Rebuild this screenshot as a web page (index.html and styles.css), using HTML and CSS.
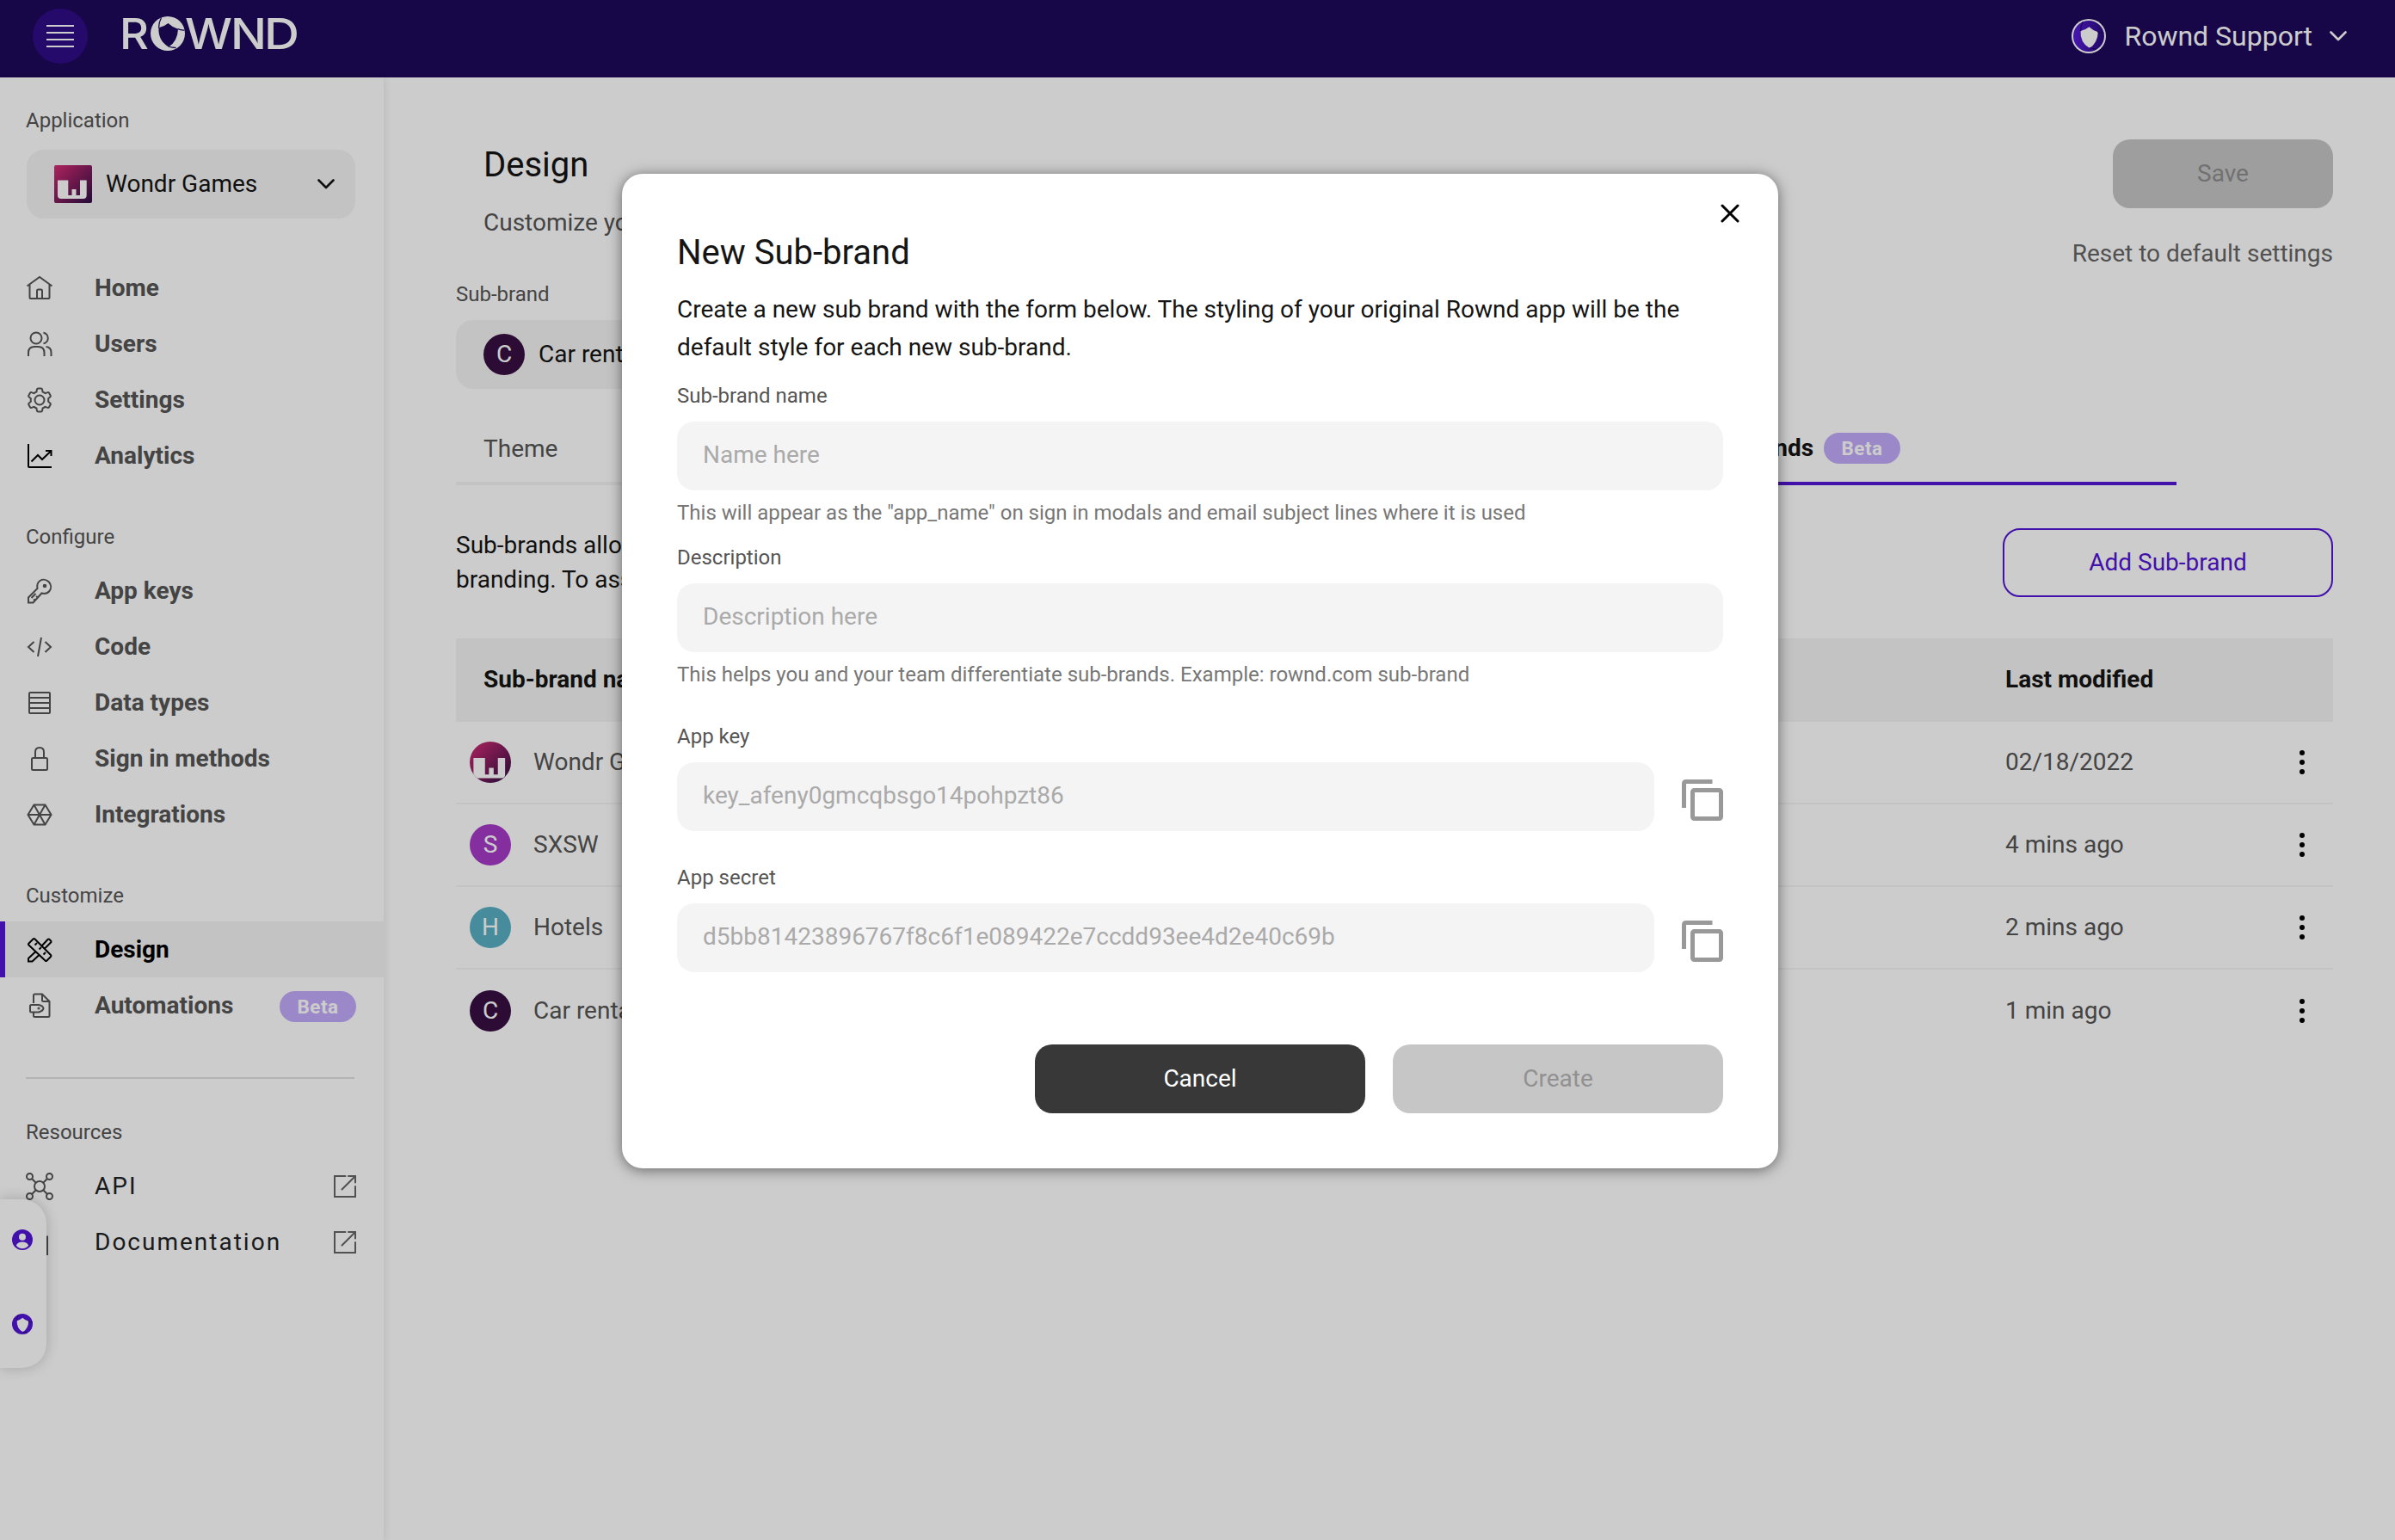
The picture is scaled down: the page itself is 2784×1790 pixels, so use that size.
FILE: index.html
```html
<!doctype html>
<html>
<head>
<meta charset="utf-8">
<title>Rownd - Design</title>
<link rel="stylesheet" href="styles.css">
</head>

<body>

<svg class="defs">
	<defs>
		<linearGradient id="wg" x1="0" y1="0" x2="1" y2="1">
			<stop offset="0" stop-color="#d92c76"/>
			<stop offset="1" stop-color="#2e0f45"/>
		</linearGradient>
		<linearGradient id="rg" x1="0" y1="0" x2="1" y2="0">
			<stop offset="0" stop-color="#5a1be0"/>
			<stop offset="1" stop-color="#2a0b7c"/>
		</linearGradient>
		<symbol id="wondr" viewBox="0 0 44 44">
			<rect width="44" height="44" fill="url(#wg)"/>
			<path fill="#fff" d="M4 17.500h12.300v17.500h4.200v-7h5v7h4.500v-17.500h7.700v17.500q0 4-4 4h-25.700q-4 0-4-4z"/>
		</symbol>
		<symbol id="shield" viewBox="0 0 40 40">
			<path fill-rule="evenodd" d="M20 0a20 20 0 1 1 0 40a20 20 0 0 1 0-40zM20.500 8Q15.500 12.200 9.500 13.200Q8.500 28 21 35.500Q31.500 29 32 14.700Q25 12.500 20.500 8z"/>
			<path class="cut" d="M12.500 1.500Q9.500 7 9.500 13.500M31.500 14.700Q35.500 16.300 39.500 16M20.800 35Q25 36.500 29.500 36.500"/>
		</symbol>
		<symbol id="chev" viewBox="0 0 20 12">
			<path d="M1.500 1.500l8.500 8.500l8.500-8.500" fill="none" stroke="currentColor" stroke-width="2.600" stroke-linecap="round" stroke-linejoin="round"/>
		</symbol>
		<symbol id="ext" viewBox="0 0 26 26">
			<path d="M13.500 1H1v24h24V13M17 1h8v7.500M24.500 1.500L9.500 16.500" fill="none" stroke="currentColor" stroke-width="2" stroke-linecap="round"/>
		</symbol>
		<symbol id="dots" viewBox="0 0 8 30">
			<circle cx="4" cy="4" r="3"/><circle cx="4" cy="15" r="3"/><circle cx="4" cy="26" r="3"/>
		</symbol>
		<symbol id="copy" viewBox="0 0 48 48">
			<path fill="none" stroke="currentColor" stroke-width="5" d="M2.500 33V5q0-2.500 2.500-2.500H35.500"/>
			<rect x="12.500" y="12.500" width="33" height="33" rx="2" fill="none" stroke="currentColor" stroke-width="5"/>
		</symbol>
	</defs>
</svg>

<div class="header">
	<a class="burger" href="#"><i></i><i></i><i></i><i></i></a>
	<svg class="logo" width="210" height="62" viewBox="-3 -12 210 62">
		<g class="logo_txt">
			<text x="-3" y="38" textLength="34" lengthAdjust="spacingAndGlyphs">R</text>
			<text x="73" y="38" textLength="55" lengthAdjust="spacingAndGlyphs">W</text>
			<text x="126" y="38" textLength="42" lengthAdjust="spacingAndGlyphs">N</text>
			<text x="165" y="38" textLength="41" lengthAdjust="spacingAndGlyphs">D</text>
		</g>
		<use href="#shield" x="33" y="0" width="40" height="40"/>
	</svg>
	<div class="account">
		<svg class="account_pic" width="40" height="40"><circle cx="20" cy="20" r="20" fill="#fff"/><use href="#shield" x="2" y="2" width="36" height="36"/></svg>
		<span>Rownd Support</span>
		<svg width="20" height="12"><use href="#chev"/></svg>
	</div>
</div>

<div class="wrap">
	<div class="side">
		<p class="label">Application</p>
		<div class="app_select">
			<svg class="app_pic" width="44" height="44"><use href="#wondr"/></svg>
			<span>Wondr Games</span>
			<svg width="20" height="12"><use href="#chev"/></svg>
		</div>
		<ul class="nav">
			<li><svg viewBox="0 0 32 32"><path d="M1.500 13.500L16 3l14.500 10.500M4.500 11.500V27q0 1 1 1h21q1 0 1-1V11.500M13 28v-9q0-1.500 1.500-1.500h3q1.500 0 1.500 1.500v9"/></svg>Home</li>
			<li><svg viewBox="0 0 32 32"><circle cx="12" cy="9" r="6.500"/><path d="M3 30v-4q0-7 7-7h4.500q7 0 7 7v4M20.500 2.700a6.400 6.400 0 0 1 0 12.600M23.500 19q6 .5 6 7v4"/></svg>Users</li>
			<li><svg viewBox="0 0 32 32"><circle cx="16" cy="16" r="5.500"/><path d="M13 3.500q.2-1 1.200-1h3.600q1 0 1.200 1l.6 3q1.500.5 2.900 1.600l2.900-1q1-.3 1.500.5l1.800 3.100q.5.900-.3 1.600l-2.300 2q.3 1.700 0 3.400l2.300 2q.8.700.3 1.600l-1.800 3.100q-.5.800-1.500.5l-2.900-1q-1.400 1.100-2.900 1.600l-.6 3q-.2 1-1.200 1h-3.600q-1 0-1.200-1l-.6-3q-1.500-.5-2.900-1.600l-2.900 1q-1 .3-1.500-.5l-1.800-3.100q-.5-.9.3-1.600l2.300-2q-.3-1.700 0-3.400l-2.300-2q-.8-.7-.3-1.600l1.800-3.100q.5-.8 1.500-.5l2.900 1q1.400-1.100 2.900-1.600z"/></svg>Settings</li>
			<li><svg class="black" viewBox="0 0 32 32"><path d="M3 2v26q0 1 1 1h26M6.500 22.500l7.500-7.500 5 5L29 10.500M23 10h6.500v6"/></svg>Analytics</li>
		</ul>
		<p class="label">Configure</p>
		<ul class="nav">
			<li><svg viewBox="0 0 32 32"><path d="M13.500 13q-1.300-6 3-9a8.300 8.300 0 0 1 11 12q-3.500 4-9 2.500L8.500 29.500H3v-6zM9 25.500l2 1.500M12 22l2 1.500M6.500 24l5-5"/><circle cx="22" cy="10" r="1.300" fill="currentColor"/></svg>App keys</li>
			<li><svg viewBox="0 0 32 32"><path d="M9.500 10l-6.500 6 6.500 6M22.500 10l6.500 6-6.500 6M18 5l-4 22"/></svg>Code</li>
			<li><svg viewBox="0 0 32 32"><rect x="4" y="4" width="24" height="24" rx="1"/><path d="M4 10h24M4 16h24M4 22h24"/></svg>Data types</li>
			<li><svg viewBox="0 0 32 32"><rect x="7" y="15" width="18" height="14" rx="1.500"/><path d="M11 15V8q0-5 5-5t5 5v7"/></svg>Sign in methods</li>
			<li><svg viewBox="0 0 32 32"><path d="M9.500 4.500h13L29.500 16l-7 11.500h-13L2.500 16zM2.500 16h27M9.500 4.500l13 23M22.500 4.500l-13 23"/></svg>Integrations</li>
		</ul>
		<p class="label">Customize</p>
		<ul class="nav">
			<li class="on"><svg class="black" viewBox="0 0 32 32"><path d="M3.500 8.500l5-5q1-1 2 0l18.500 18.500q1 1 0 2l-4.500 4.500q-1 1-2 0L3.500 10.500q-1-1 0-2zM18.500 11.500l7-7.500q1-1 2 0l1.500 1.500q1 1 0 2l-7.500 7.500M11.500 18l-8.500 8v3.500h4.500l8-7.500M13 8l-2.500 2.500M18 13l-2.500 2.500M23 19l-2.500 2.500"/></svg>Design</li>
			<li><svg viewBox="0 0 32 32"><path d="M9 13V4q0-1.500 1.500-1.500H19l8.500 8.500v16.500q0 1.500-1.500 1.500H10.500Q9 29 9 27.500V24M19 2.500V9.500q0 1.500 1.500 1.500h7M6.500 15H15q5 1 5.500 4-.5 3-5.500 4.500H6.500q-1.500 0-1.500-1.500v-5.500q0-1.500 1.500-1.500z"/><circle cx="15" cy="19" r=".6"/></svg>Automations<span class="beta">Beta</span></li>
		</ul>
		<div class="line"></div>
		<p class="label">Resources</p>
		<ul class="nav links">
			<li><svg viewBox="0 0 32 32"><circle cx="16" cy="16" r="6"/><circle cx="4.500" cy="4.500" r="3.500"/><circle cx="27.500" cy="4.500" r="3.500"/><circle cx="4.500" cy="27.500" r="3.500"/><circle cx="27.500" cy="27.500" r="3.500"/><path d="M7 7l5 5M25 7l-5 5M7 25l5-5M25 25l-5-5"/></svg>API<svg class="ext"><use href="#ext"/></svg></li>
			<li><svg viewBox="0 0 32 32"><path d="M3 9.500h22V30H3z"/></svg>Documentation<svg class="ext"><use href="#ext"/></svg></li>
		</ul>
	</div>

	<div class="main">
		<div class="top">
			<div class="top_l">
				<h1>Design</h1>
				<p>Customize your app</p>
			</div>
			<div class="top_r">
				<a class="btn save" href="#">Save</a>
				<a class="reset" href="#">Reset to default settings</a>
			</div>
		</div>
		<p class="label sub_label">Sub-brand</p>
		<div class="sub_select"><b class="av c1">C</b>Car rentals</div>
		<div class="tabs">
			<a class="tab" href="#">Theme</a>
			<a class="tab on" href="#">Sub-brands<span class="beta">Beta</span></a>
		</div>
		<div class="intro">
			<p>Sub-brands allow<br>branding. To assign</p>
			<a class="btn add" href="#">Add Sub-brand</a>
		</div>
		<div class="table">
			<div class="tr th"><span class="name">Sub-brand name</span><span class="date">Last modified</span></div>
			<div class="tr"><svg class="av" width="48" height="48"><use href="#wondr"/></svg><span class="name">Wondr Games</span><span class="date">02/18/2022</span><svg class="dots"><use href="#dots"/></svg></div>
			<div class="tr"><b class="av c2">S</b><span class="name">SXSW</span><span class="date">4 mins ago</span><svg class="dots"><use href="#dots"/></svg></div>
			<div class="tr"><b class="av c3">H</b><span class="name">Hotels</span><span class="date">2 mins ago</span><svg class="dots"><use href="#dots"/></svg></div>
			<div class="tr"><b class="av c1">C</b><span class="name">Car rentals</span><span class="date">1 min ago</span><svg class="dots"><use href="#dots"/></svg></div>
		</div>
	</div>
</div>

<div class="widget">
	<svg width="24" height="24" viewBox="0 0 24 24"><circle cx="12" cy="12" r="12"/><circle cx="12" cy="8.800" r="4" fill="#fff"/><path fill="#fff" d="M4.800 18.500q2-4 7.200-4t7.200 4q-2.700 3.800-7.200 3.800t-7.200-3.800z"/></svg>
	<svg width="24" height="24"><use href="#shield"/></svg>
</div>

<div class="mask"></div>

<div class="modal">
	<svg class="close" width="22" height="22" viewBox="0 0 22 22"><path d="M2 2l18 18M20 2L2 20"/></svg>
	<h2>New Sub-brand</h2>
	<p class="desc">Create a new sub brand with the form below. The styling of your original Rownd app will be the default style for each new sub-brand.</p>
	<p class="f_label">Sub-brand name</p>
	<div class="input">Name here</div>
	<p class="help">This will appear as the "app_name" on sign in modals and email subject lines where it is used</p>
	<p class="f_label">Description</p>
	<div class="input">Description here</div>
	<p class="help">This helps you and your team differentiate sub-brands. Example: rownd.com sub-brand</p>
	<p class="f_label key_label">App key</p>
	<div class="row"><div class="input">key_afeny0gmcqbsgo14pohpzt86</div><svg class="copy"><use href="#copy"/></svg></div>
	<p class="f_label secret_label">App secret</p>
	<div class="row"><div class="input">d5bb81423896767f8c6f1e089422e7ccdd93ee4d2e40c69b</div><svg class="copy"><use href="#copy"/></svg></div>
	<div class="btns">
		<a class="btn cancel" href="#">Cancel</a>
		<a class="btn create" href="#">Create</a>
	</div>
</div>
</body>
</html>
```
FILE: styles.css
```css
*{ margin:0; padding:0; list-style:none; box-sizing:border-box;}
body{ width:2784px; height:1790px; overflow:hidden; background:#fff; font:28px/40px Roboto,"Liberation Sans",sans-serif; color:#151515; position:relative;}
a{ text-decoration:none; color:inherit;}
svg{ display:block; flex:none;}
.defs{ position:absolute; width:0; height:0;}
.btn{ display:block; width:384px; height:80px; line-height:79px; border-radius:20px; text-align:center;}
.beta{ width:89px; height:36px; border-radius:18px; background:#c2abfa; color:#fff; font-size:22.4px; font-weight:bold; line-height:36px; letter-spacing:.5px; text-align:center;}
.cut{ fill:none; stroke:#1e095a; stroke-width:1.3;}

.header{ height:90px; background:#1e095a; color:#fff; display:flex; padding:10px 56px 0 38px;}
.burger{ width:64px; height:64px; border-radius:50%; background:#2f0d87; display:flex; flex-direction:column; align-items:center; justify-content:center; gap:6px;}
.burger i{ width:32px; height:2px; background:#fff;}
.logo{ margin:-3px 0 0 37px; fill:#fff;}
.logo_txt{ font:500 50px Inter,sans-serif;}
.account{ margin-left:auto; height:64px; display:flex; align-items:center; font-size:32px;}
.account span{ margin:0 20px 0 21px;}
.account_pic{ fill:url(#rg);}
.account_pic .cut{ stroke:#fff;}

.wrap{ display:flex; height:1700px;}
.side{ width:446px; padding-top:20px; box-shadow:2px 0 8px rgba(0,0,0,.08);}
.label{ font-size:24px; line-height:60px; color:#555; padding-left:30px;}
.app_select{ margin:4px 33px 48px 31px; height:80px; border-radius:20px; background:#f4f4f4; display:flex; align-items:center; padding:0 24px 0 32px;}
.app_pic{ border-radius:2px;}
.app_select span{ flex:1; margin-left:16px; margin-top:-1px;}
.nav li{ height:65px; display:flex; align-items:center; padding-left:30px; font-weight:bold; color:#555;}
.nav li > svg:first-child{ width:32px; height:32px; margin-right:48px; fill:none; stroke:currentColor; stroke-width:2; overflow:visible;}
.nav li > svg.black{ color:#000;}
.nav li.on{ background:#f4f4f4; color:#000; border-left:6px solid #5315d5; padding-left:24px;}
.nav .beta{ margin:2px 32px 0 auto;}
.nav + .label{ margin-top:32px;}
.line{ height:2px; background:#e0e0e0; margin:51px 34px 32px 30px;}
.links li{ font-weight:normal; letter-spacing:2px; color:#1f2326;}
.links li svg{ color:#555;}
.links li .ext{ width:26px; height:26px; margin:0 32px 0 auto; color:#666;}

.main{ flex:1; padding:72px 72px 0 84px;}
.top{ display:flex; justify-content:space-between; height:150px;}
.top_l{ padding-left:32px; color:#555;}
.top h1{ font-size:40px; font-weight:normal; line-height:60px; color:#151515;}
.top p{ line-height:40px; margin-top:17px;}
.save{ width:256px; margin-left:auto; background:#c6c6c6; color:#8e8e8e;}
.reset{ display:block; margin-top:33px; color:#666; text-align:right;}
.sub_label{ padding-left:0;}
.sub_select{ width:384px; height:80px; border-radius:20px; background:#f4f4f4; display:flex; align-items:center; padding-left:32px; gap:16px;}
.av{ display:block; width:48px; height:48px; border-radius:50%; color:#fff; font-weight:normal; line-height:47px; text-align:center; flex:none;}
.c1{ background:#371043;}
.c2{ background:#a73ac8;}
.c3{ background:#58b0c4;}
.tabs{ display:flex; width:2000px; margin-top:28px;}
.tab{ flex:1; height:84px; line-height:84px; padding-left:32px; border-bottom:4px solid #f4f4f4; color:#555;}
.tab.on{ flex:none; width:886px; padding:2px 3px 0 0; display:flex; justify-content:center; align-items:center; gap:12px; font-weight:bold; color:#151515; border-color:#5315d5;}
.intro{ display:flex; justify-content:space-between; height:178px; padding-top:50px;}
.add{ border:2px solid #5315d5; color:#5315d5; line-height:75px;}
.tr{ height:96px; display:flex; align-items:center; padding-left:16px; border-bottom:2px solid #f4f4f4; color:#555;}
.tr:last-child{ border:0;}
.tr .name{ width:1711px; margin-left:26px;}
.tr .date{ width:341px;}
.th{ height:97px; padding-left:32px; background:#f4f4f4; font-weight:bold; color:#151515;}
.th .name{ width:1769px; margin-left:0;}
.dots{ width:8px; height:30px; fill:#000;}

.widget{ position:absolute; left:0; top:1394px; width:54px; height:196px; background:#fff; border-radius:0 28px 28px 0; box-shadow:0 0 16px rgba(0,0,0,.2); padding:35px 0 0 14px; fill:#5315d5;}
.widget svg + svg{ margin-top:74px;}
.widget .cut{ stroke:#fff;}

.mask{ position:absolute; left:0; top:0; width:100%; height:100%; background:rgba(0,0,0,.2);}
.modal{ position:absolute; left:723px; top:202px; width:1344px; height:1156px; background:#fff; border-radius:24px; box-shadow:0 2px 16px rgba(0,0,0,.5); padding:62px 64px 0;}
.close{ position:absolute; right:45px; top:35px; stroke:#000; stroke-width:3; stroke-linecap:round;}
.modal h2{ font-size:40px; font-weight:normal; line-height:60px;}
.desc{ line-height:44px; margin-top:14px;}
.f_label{ font-size:24px; line-height:30px; color:#555; margin-top:19px;}
.input{ height:80px; line-height:77px; margin-top:15px; border-radius:20px; background:#f4f4f4; color:#aaa; padding-left:30px;}
.help{ font-size:24px; line-height:30px; color:#777; margin-top:11px;}
.help + .f_label{ margin-top:22px;}
.help + .key_label{ margin-top:42px;}
.secret_label{ margin-top:39px;}
.row{ display:flex; align-items:flex-start; justify-content:space-between;}
.row .input{ width:1136px;}
.copy{ width:48px; height:48px; margin-top:35px; color:#999;}
.btns{ display:flex; justify-content:flex-end; gap:32px; margin-top:84px;}
.cancel{ background:#383838; color:#fff;}
.create{ background:#c6c6c6; color:#919191;}
```
